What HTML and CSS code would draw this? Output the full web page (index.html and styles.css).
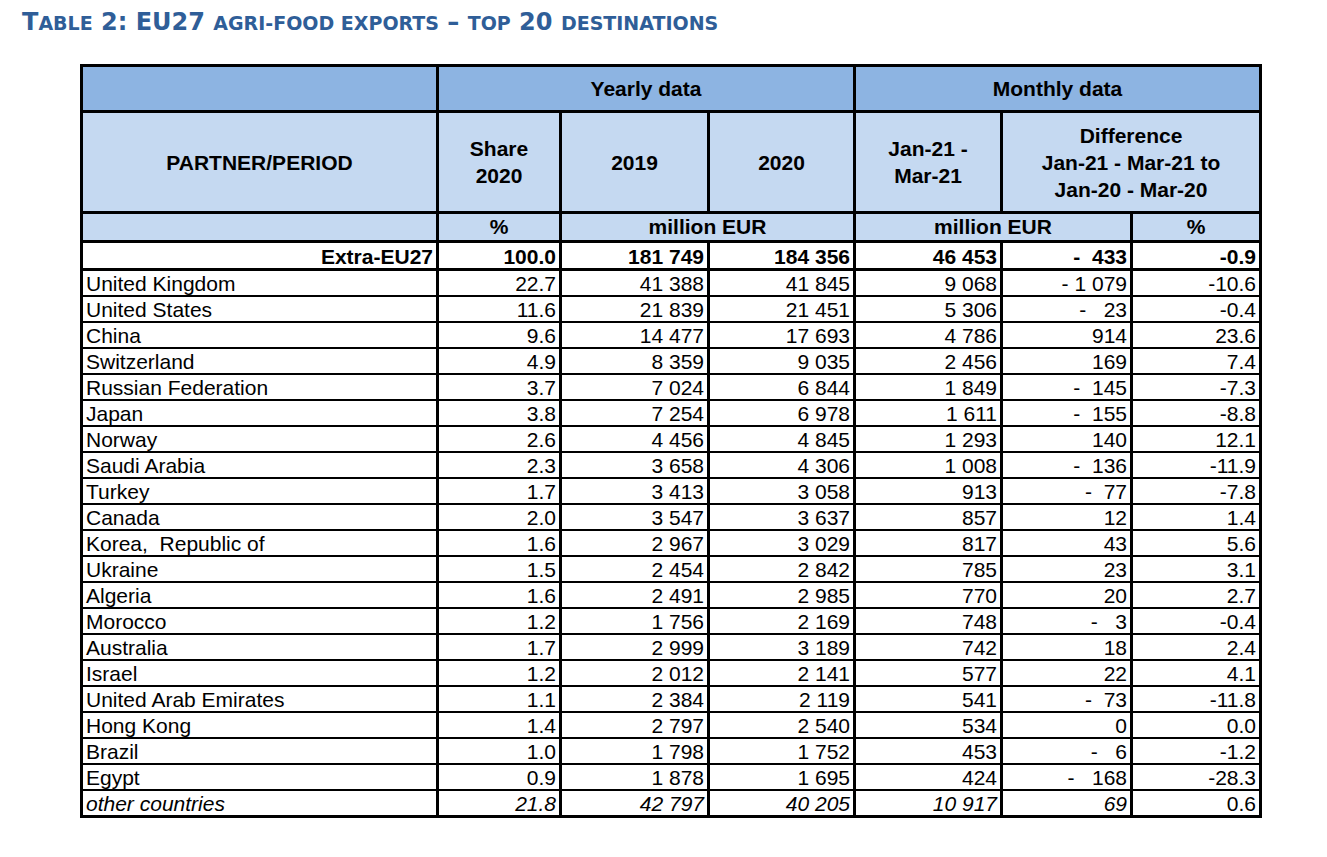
FILE: index.html
```html
<!DOCTYPE html>
<html lang="en">
<head>
<meta charset="utf-8">
<title>EU27 agri-food exports – top 20 destinations</title>
<link rel="stylesheet" href="styles.css">
</head>
<body>
<h1 class="title">T<span class="sc">ABLE</span> 2: EU27 <span class="sc">AGRI-FOOD EXPORTS</span> – <span class="sc">TOP</span> 20 <span class="sc">DESTINATIONS</span></h1>
<div class="wrap">
<table class="data">
<colgroup>
<col class="c-partner"><col class="c-share"><col class="c-y19"><col class="c-y20"><col class="c-jan"><col class="c-diff"><col class="c-pct">
</colgroup>
<thead>
<tr class="h1">
<th></th>
<th colspan="3">Yearly data</th>
<th colspan="3">Monthly data</th>
</tr>
<tr class="h2">
<th>PARTNER/PERIOD</th>
<th>Share<br>2020</th>
<th>2019</th>
<th>2020</th>
<th>Jan-21 -<br>Mar-21</th>
<th colspan="2">Difference<br>Jan-21 - Mar-21 to<br>Jan-20 - Mar-20</th>
</tr>
<tr class="h3">
<th></th>
<th>%</th>
<th colspan="2">million EUR</th>
<th colspan="2">million EUR</th>
<th>%</th>
</tr>
</thead>
<tbody>
<tr class="total">
<td class="name right">Extra-EU27</td><td>100.0</td><td>181 749</td><td>184 356</td><td>46 453</td><td class="diff">-  433</td><td>-0.9</td>
</tr>
<tr><td class="name">United Kingdom</td><td>22.7</td><td>41 388</td><td>41 845</td><td>9 068</td><td class="diff">- 1 079</td><td>-10.6</td></tr>
<tr><td class="name">United States</td><td>11.6</td><td>21 839</td><td>21 451</td><td>5 306</td><td class="diff">-   23</td><td>-0.4</td></tr>
<tr><td class="name">China</td><td>9.6</td><td>14 477</td><td>17 693</td><td>4 786</td><td class="diff">914</td><td>23.6</td></tr>
<tr><td class="name">Switzerland</td><td>4.9</td><td>8 359</td><td>9 035</td><td>2 456</td><td class="diff">169</td><td>7.4</td></tr>
<tr><td class="name">Russian Federation</td><td>3.7</td><td>7 024</td><td>6 844</td><td>1 849</td><td class="diff">-  145</td><td>-7.3</td></tr>
<tr><td class="name">Japan</td><td>3.8</td><td>7 254</td><td>6 978</td><td>1 611</td><td class="diff">-  155</td><td>-8.8</td></tr>
<tr><td class="name">Norway</td><td>2.6</td><td>4 456</td><td>4 845</td><td>1 293</td><td class="diff">140</td><td>12.1</td></tr>
<tr><td class="name">Saudi Arabia</td><td>2.3</td><td>3 658</td><td>4 306</td><td>1 008</td><td class="diff">-  136</td><td>-11.9</td></tr>
<tr><td class="name">Turkey</td><td>1.7</td><td>3 413</td><td>3 058</td><td>913</td><td class="diff">-  77</td><td>-7.8</td></tr>
<tr><td class="name">Canada</td><td>2.0</td><td>3 547</td><td>3 637</td><td>857</td><td class="diff">12</td><td>1.4</td></tr>
<tr><td class="name">Korea,  Republic of</td><td>1.6</td><td>2 967</td><td>3 029</td><td>817</td><td class="diff">43</td><td>5.6</td></tr>
<tr><td class="name">Ukraine</td><td>1.5</td><td>2 454</td><td>2 842</td><td>785</td><td class="diff">23</td><td>3.1</td></tr>
<tr><td class="name">Algeria</td><td>1.6</td><td>2 491</td><td>2 985</td><td>770</td><td class="diff">20</td><td>2.7</td></tr>
<tr><td class="name">Morocco</td><td>1.2</td><td>1 756</td><td>2 169</td><td>748</td><td class="diff">-   3</td><td>-0.4</td></tr>
<tr><td class="name">Australia</td><td>1.7</td><td>2 999</td><td>3 189</td><td>742</td><td class="diff">18</td><td>2.4</td></tr>
<tr><td class="name">Israel</td><td>1.2</td><td>2 012</td><td>2 141</td><td>577</td><td class="diff">22</td><td>4.1</td></tr>
<tr><td class="name">United Arab Emirates</td><td>1.1</td><td>2 384</td><td>2 119</td><td>541</td><td class="diff">-  73</td><td>-11.8</td></tr>
<tr><td class="name">Hong Kong</td><td>1.4</td><td>2 797</td><td>2 540</td><td>534</td><td class="diff">0</td><td>0.0</td></tr>
<tr><td class="name">Brazil</td><td>1.0</td><td>1 798</td><td>1 752</td><td>453</td><td class="diff">-   6</td><td>-1.2</td></tr>
<tr><td class="name">Egypt</td><td>0.9</td><td>1 878</td><td>1 695</td><td>424</td><td class="diff">-   168</td><td>-28.3</td></tr>
<tr class="other"><td class="name it">other countries</td><td class="it">21.8</td><td class="it">42 797</td><td class="it">40 205</td><td class="it">10 917</td><td class="diff it">69</td><td>0.6</td></tr>
</tbody>
</table>
</div>
</body>
</html>
```

FILE: styles.css
```css
html, body {
  margin: 0;
  background: #ffffff;
}

body {
  padding: 9px 0 0 22px;
  font-family: "Liberation Sans", Arial, sans-serif;
  color: #000000;
}

.title {
  margin: 0;
  height: 27px;
  font-family: "DejaVu Sans", Verdana, sans-serif;
  font-size: 24px;
  line-height: 27px;
  font-weight: bold;
  color: #2f5e98;
  white-space: nowrap;
}

.title .sc {
  font-size: 19px;
}

.wrap {
  padding: 28px 0 0 58px;
}

.data {
  border-collapse: collapse;
  table-layout: fixed;
  width: 1179px;
  border: 3px solid #000;
  font-size: 21px;
}

.c-partner { width: 356px; }
.c-share { width: 123px; }
.c-y19 { width: 148px; }
.c-y20 { width: 146px; }
.c-jan { width: 147px; }
.c-diff { width: 130px; }
.c-pct { width: 129px; }

.data th,
.data td {
  border-left: 3px solid #000;
  border-right: 3px solid #000;
  border-top: 2px solid #000;
  border-bottom: 2px solid #000;
  padding: 0 3px;
  box-sizing: border-box;
}

.data th {
  font-weight: bold;
  text-align: center;
  vertical-align: middle;
  line-height: 27px;
}

.h1 th {
  background: #8db4e2;
  height: 46px;
  border-bottom-width: 3px;
}

.h2 th {
  background: #c5d9f1;
  height: 101px;
  border-bottom-width: 3px;
}

.h3 th {
  background: #c5d9f1;
  height: 29px;
  line-height: 24px;
  border-bottom-width: 3px;
}

.data td {
  height: 26px;
  line-height: 23px;
  text-align: right;
  vertical-align: bottom;
  white-space: pre;
}

.data td.name {
  text-align: left;
}

.data td.name.right {
  text-align: right;
}

.total td {
  font-weight: bold;
  height: 28px;
  border-bottom-width: 3px;
}

.other td {
  height: 27px;
}

.it {
  font-style: italic;
}
```
